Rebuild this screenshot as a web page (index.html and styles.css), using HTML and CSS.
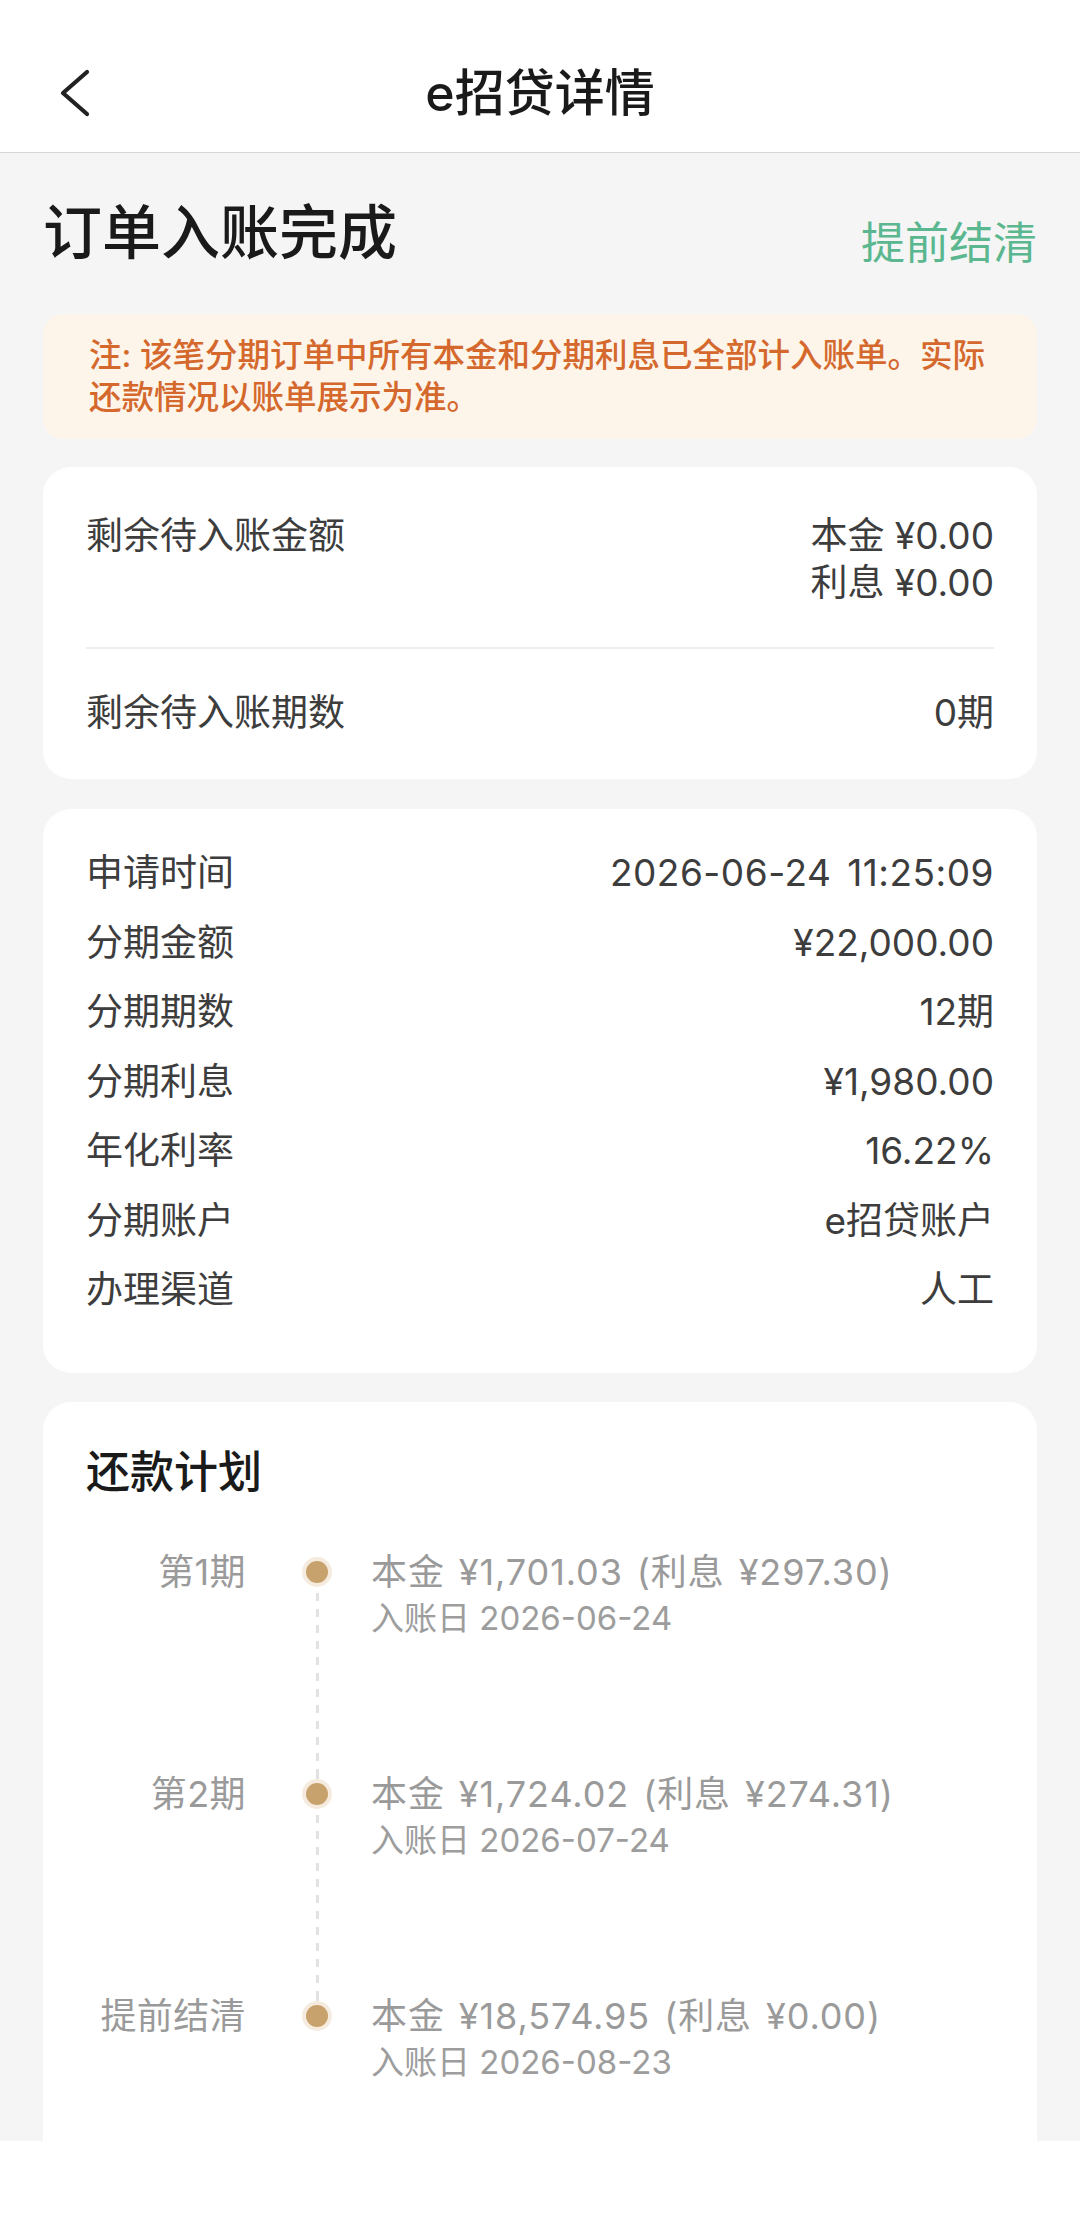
FILE: index.html
```html
<!DOCTYPE html>
<html lang="zh-CN">
<head>
<meta charset="utf-8">
<title>e招贷详情</title>
<link rel="stylesheet" href="styles.css">
</head>
<body>
<div class="screen">
  <header class="nav">
    <div class="nav-left">
      <svg class="back-icon" viewBox="0 0 32 50" width="32" height="50" aria-hidden="true">
        <path d="M28 4 L4 25 L28 46" fill="none" stroke="#222" stroke-width="4.2" stroke-linecap="round" stroke-linejoin="round"/>
      </svg>
    </div>
    <h1 class="nav-title">e招贷详情</h1>
    <div class="nav-right"></div>
  </header>

  <main class="content">
    <div class="status-row">
      <h2 class="status-title">订单入账完成</h2>
      <span class="settle-link">提前结清</span>
    </div>

    <div class="notice">注: 该笔分期订单中所有本金和分期利息已全部计入账单。实际还款情况以账单展示为准。</div>

    <section class="card card-pending">
      <div class="kv kv-top">
        <span class="kv-label">剩余待入账金额</span>
        <span class="kv-values">
          <span class="kv-line">本金 ¥0.00</span>
          <span class="kv-line">利息 ¥0.00</span>
        </span>
      </div>
      <div class="divider"></div>
      <div class="kv">
        <span class="kv-label">剩余待入账期数</span>
        <span class="kv-value">0期</span>
      </div>
    </section>

    <section class="card card-info">
      <div class="info-row"><span class="kv-label">申请时间</span><span class="kv-value kv-datetime">2026-06-24 11:25:09</span></div>
      <div class="info-row"><span class="kv-label">分期金额</span><span class="kv-value">¥22,000.00</span></div>
      <div class="info-row"><span class="kv-label">分期期数</span><span class="kv-value">12期</span></div>
      <div class="info-row"><span class="kv-label">分期利息</span><span class="kv-value">¥1,980.00</span></div>
      <div class="info-row"><span class="kv-label">年化利率</span><span class="kv-value">16.22%</span></div>
      <div class="info-row"><span class="kv-label">分期账户</span><span class="kv-value">e招贷账户</span></div>
      <div class="info-row"><span class="kv-label">办理渠道</span><span class="kv-value">人工</span></div>
    </section>

    <section class="card card-plan">
      <h3 class="plan-title">还款计划</h3>
      <ol class="timeline">
        <li class="tl-item tl-first">
          <span class="tl-label">第1期</span>
          <span class="tl-axis"><span class="tl-pre"></span><span class="tl-dot"></span><span class="tl-line"></span></span>
          <span class="tl-body">
            <span class="tl-main">本金 ¥1,701.03 (利息 ¥297.30)</span>
            <span class="tl-date">入账日 2026-06-24</span>
          </span>
        </li>
        <li class="tl-item">
          <span class="tl-label">第2期</span>
          <span class="tl-axis"><span class="tl-pre"></span><span class="tl-dot"></span><span class="tl-line"></span></span>
          <span class="tl-body">
            <span class="tl-main">本金 ¥1,724.02 (利息 ¥274.31)</span>
            <span class="tl-date">入账日 2026-07-24</span>
          </span>
        </li>
        <li class="tl-item tl-last">
          <span class="tl-label">提前结清</span>
          <span class="tl-axis"><span class="tl-pre"></span><span class="tl-dot"></span><span class="tl-line"></span></span>
          <span class="tl-body">
            <span class="tl-main">本金 ¥18,574.95 (利息 ¥0.00)</span>
            <span class="tl-date">入账日 2026-08-23</span>
          </span>
        </li>
      </ol>
    </section>
  </main>

  <footer class="bottom-bar"></footer>
</div>
</body>
</html>
```

FILE: styles.css
```css
* {
  box-sizing: border-box;
}

html, body {
  margin: 0;
  padding: 0;
  background: #ffffff;
}

body {
  font-family: Inter, "Noto Sans CJK SC", "Noto Sans", sans-serif;
  color: #3a3a3a;
}

.screen {
  width: 1080px;
  height: 2239px;
  display: flex;
  flex-direction: column;
  overflow: hidden;
}

/* ---------- nav ---------- */
.nav {
  flex: none;
  height: 153px;
  padding: 63px 0 29px;
  background: #ffffff;
  border-bottom: 1px solid #d6d6d6;
  display: grid;
  grid-template-columns: 1fr auto 1fr;
  align-items: center;
}

.nav-left {
  display: flex;
  align-items: center;
  padding-left: 59px;
}

.back-icon {
  display: block;
}

.nav-title {
  margin: 0;
  font-size: 50px;
  line-height: 60px;
  font-weight: 500;
  color: #1a1a1a;
  text-align: center;
}

/* ---------- content ---------- */
.content {
  flex: none;
  height: 1988px;
  overflow: hidden;
  background: #f5f5f5;
  padding: 45px 43px 0;
  display: flex;
  flex-direction: column;
}

.status-row {
  display: flex;
  justify-content: space-between;
  align-items: flex-start;
}

.status-title {
  margin: 0;
  font-size: 59px;
  line-height: 70px;
  font-weight: 500;
  color: #1a1a1a;
}

.settle-link {
  margin-top: 20px;
  font-size: 44px;
  line-height: 50px;
  color: #5bb78f;
}

.notice {
  margin-top: 46px;
  padding: 21px 30px 20px 46px;
  background: #fdf5ea;
  border-radius: 20px;
  color: #d4682d;
  font-size: 32.5px;
  line-height: 42px;
  font-weight: 500;
}

.card {
  background: #ffffff;
  border-radius: 28px;
  flex: none;
}

.card-pending {
  margin-top: 28px;
  padding: 45px 43px 43px;
}

.kv {
  display: flex;
  justify-content: space-between;
  align-items: flex-start;
  font-size: 37px;
  line-height: 47px;
}

.kv-label {
  color: #3d3d3d;
}

.kv-value {
  color: #3d3d3d;
  text-align: right;
}

.kv-datetime {
  letter-spacing: 0.5px;
  word-spacing: 5px;
}

.kv-values {
  display: flex;
  flex-direction: column;
  align-items: flex-end;
  color: #3d3d3d;
}

.divider {
  height: 2px;
  background: #eeeeee;
  margin: 41px 0 40px;
}

.card-info {
  margin-top: 30px;
  padding: 29px 43px 48px;
}

.info-row {
  display: flex;
  justify-content: space-between;
  font-size: 37px;
  line-height: 69.5px;
}

/* ---------- plan ---------- */
.card-plan {
  margin-top: 29px;
  padding: 40px 43px 120px;
}

.plan-title {
  margin: 0;
  font-size: 44px;
  line-height: 60px;
  font-weight: 500;
  color: #1a1a1a;
}

.timeline {
  list-style: none;
  margin: 47px 0 0;
  padding: 0;
}

.tl-item {
  display: flex;
  align-items: stretch;
  min-height: 222px;
}

.tl-label {
  flex: none;
  width: 160px;
  text-align: right;
  font-size: 36px;
  line-height: 46px;
  color: #9a9a9a;
  letter-spacing: 0.4px;
}

.tl-axis {
  flex: none;
  width: 30px;
  margin: 0 39px 0 56px;
  display: flex;
  flex-direction: column;
  align-items: center;
}

.tl-pre {
  flex: none;
  width: 3px;
  height: 12px;
  background: repeating-linear-gradient(to bottom, #e2e2e2 0 8px, transparent 8px 16px);
}

.tl-first .tl-pre {
  background: transparent;
}

.tl-dot {
  flex: none;
  width: 22px;
  height: 22px;
  border-radius: 50%;
  background: #c8a26c;
  box-shadow: 0 0 0 4px #f6ebdf;
}

.tl-line {
  flex: 1;
  width: 3px;
  margin-top: 10px;
  background: repeating-linear-gradient(to bottom, #e2e2e2 0 8px, transparent 8px 16px);
}

.tl-last .tl-line {
  background: transparent;
}

.tl-body {
  display: flex;
  flex-direction: column;
}

.tl-main {
  font-size: 36px;
  line-height: 46px;
  color: #9a9a9a;
  letter-spacing: 0.9px;
  word-spacing: 3px;
}

.tl-date {
  font-size: 33px;
  line-height: 46px;
  color: #9d9d9d;
}

/* ---------- bottom ---------- */
.bottom-bar {
  flex: 1;
  background: #ffffff;
}
```
